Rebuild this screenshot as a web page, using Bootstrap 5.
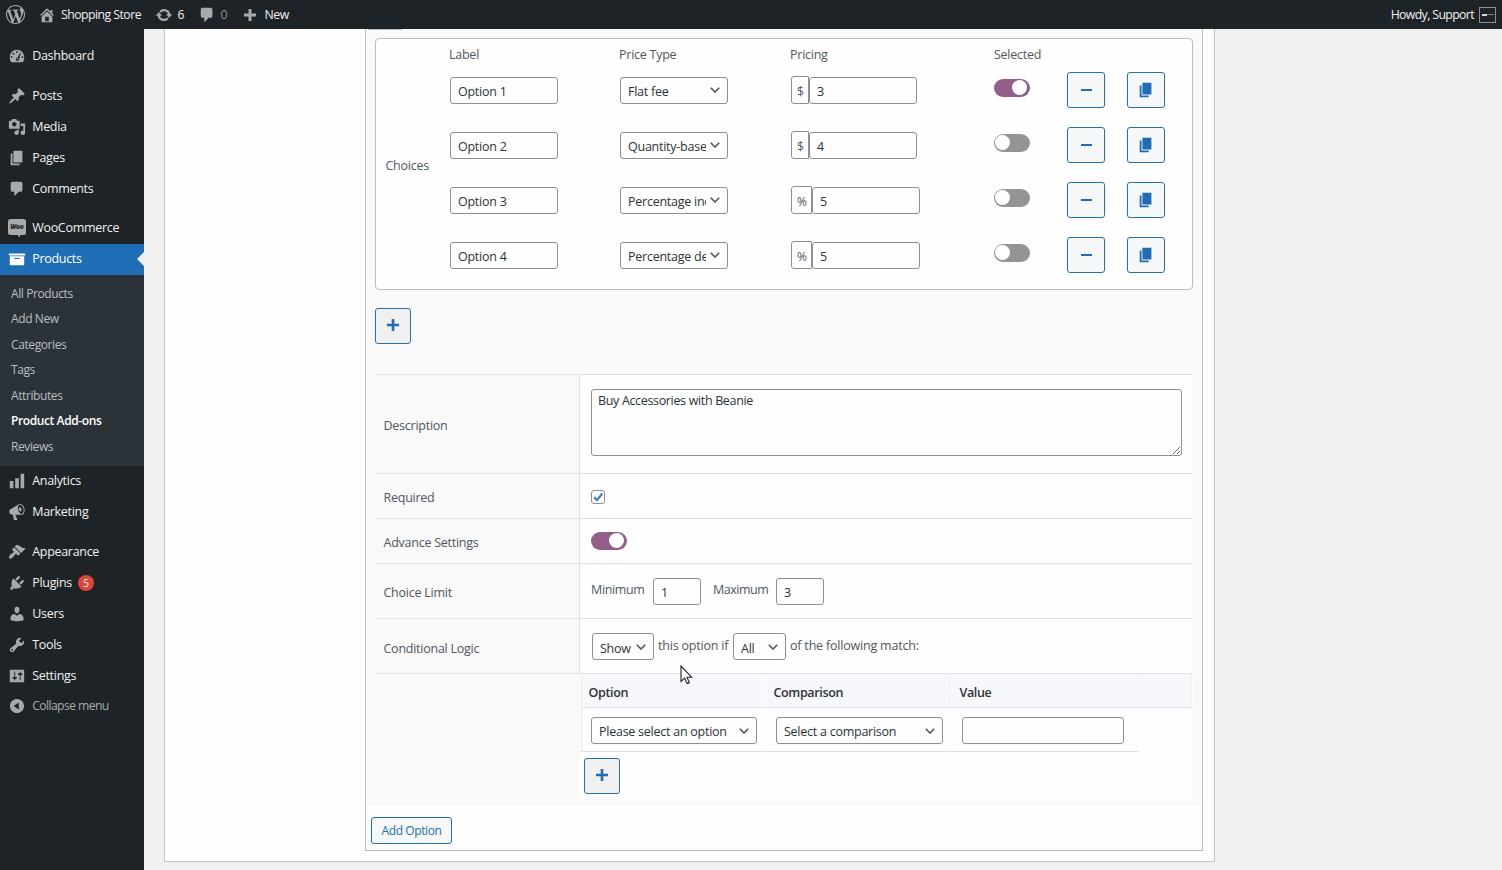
<!DOCTYPE html>
<html lang="en">
<head>
<meta charset="utf-8">
<title>Product Add-ons</title>
<link href="https://cdn.jsdelivr.net/npm/bootstrap@5.3.0/dist/css/bootstrap.min.css" rel="stylesheet">
<style>
body{font-family:"Open Sans","Noto Sans",sans-serif;font-size:12.5px;line-height:18px;letter-spacing:-.25px;color:#50575e;background:#f0f0f1;height:870px;overflow:hidden}
svg{display:block;flex:none}
.topbar{height:29px;background:#1d2327;color:#f0f0f1;font-size:12.3px;letter-spacing:-.55px}
.topbar svg,.side svg{fill:#a7aaad}
.side{width:144px;background:#1d2327;color:#f0f0f1;padding-top:11.5px}
.side-item{height:30.9px;padding-left:7.5px;gap:6.7px;letter-spacing:-.3px}
.side-item.gap-top{margin-top:9px}
.side-item.active{background:#1f6db5;color:#fff;position:relative}
.side-item.active svg{fill:#fff}
.side-item.active::after{content:"";position:absolute;right:0;top:8px;border:7.5px solid transparent;border-right-color:#f0f0f1;border-left:0}
.side-item.collapse-item{color:#a7aaad;font-size:12.2px;letter-spacing:-.6px}
.sub{background:#2c3338;padding:6px 0 6.5px 11px;color:#bbbec1;font-size:12px;letter-spacing:-.4px}
.sub div{height:25.5px;line-height:25.5px}
.sub .current{color:#fff;font-weight:600;letter-spacing:-.4px}
.count{width:16px;height:16px;background:#e0443a;font-size:10px;line-height:16px;color:#fff}
.avatar{width:17px;height:16px;border:1px solid #8c8f94;background:#1d2327}
.avatar i{width:5px;height:2px;background:#d5d5d5}
.avatar b{width:7px;height:1px;background:#777}
.panel{width:1051px;height:833px;margin-left:20px;background:#fefefe;border:1px solid #c3c4c7;border-top:0;padding:0 11px 10px 200px}
.addon{border:1px solid #b9bbbf;border-top:0;height:822px}
.addon-body{background:#f9f9fa;height:777px;padding:9px 9px 0}
.stub{width:34px;height:1px;background:#b9bbbf;margin:-9px 0 8px -7px}
.choices{height:252px;border:1px solid #b9bbbf;border-radius:4px;background:#fefefe}
.choices-name{width:74px;padding:3px 0 0 9.5px}
.choice{display:grid;grid-template-columns:170px 171px 203px 73px 60px 38px;align-items:center;height:55px}
.choice.head{height:15px;margin:7px 0 2px}
.choice.head span{margin-left:-1px}
.fld,.fld:disabled{height:27px;min-height:0;border:1px solid #8c8f94;border-radius:3px;background-color:#fefefe;color:#2c3338;font-size:12.5px;line-height:18px;letter-spacing:-.25px;padding:3px 7px 1px}
select.fld{padding-right:21px;background-image:url("data:image/svg+xml,%3Csvg xmlns='http://www.w3.org/2000/svg' viewBox='0 0 10 6'%3E%3Cpath d='M.8.8 5 5 9.2.8' fill='none' stroke='%2350575e' stroke-width='1.6'/%3E%3C/svg%3E");background-size:10px 6px;background-position:right 7px top 10px}
.choice select.fld{background-position-y:9px}
.w108{width:108px}
.unit{height:28px;border:1px solid #8c8f94;border-radius:3px 0 0 3px;padding:6px 4px 0 5px;line-height:18px;font-size:12px}
.switch{width:36px;height:18px;border-radius:9px;background:#949494;padding:1px}
.switch i{width:15px;height:15px;border-radius:50%;background:#fff}
.switch.on{background:#935f88;padding-right:3px}
.ibtn{width:38px;height:36px;border:1px solid #2271b1;border-radius:3px;background:#f6f7f7;padding:0}
.choice .ibtn{margin-top:-1px}
.ibtn svg{fill:#1f6db5}
.ibtn.sq{width:36px;background:#f0f0f1}
.settings{margin-top:30px;width:818px;border-top:1px solid #dfe0e3}
.srow{border-bottom:1px solid #dfe0e3}
.srow>.k{width:205px;border-right:1px solid #dfe0e3;padding-left:8.5px;padding-top:3px}
.srow>.v{background:#fefefe;padding-left:11px}
textarea.fld{height:67px;padding:2px 6px;width:591px;resize:vertical;letter-spacing:-.34px}
.cbx{width:14px;height:14px;border:1px solid #8c8f94;border-radius:3px;background:#fff;margin-top:2px}
.cond{display:grid;grid-template-columns:185px 186px 188px 53px;width:612px;margin-left:1px}
.cond .h{height:34px;background:#f6f8fb;border-bottom:1px solid #dfe0e5;border-right:1px solid #fff;font-weight:600;color:#2c3338;padding:10px 0 0 7.5px;letter-spacing:-.35px;box-shadow:inset -1px 0 #eef0f3}
.cond .c{height:44px;border-bottom:1px solid #dfe0e5;border-right:2px solid #fefefe;padding:9px 0 0 10px}
.cond .h:first-child,.cond .c.first{box-shadow:inset 1px 0 #e6e8ec}
.logic .fld{padding-top:5px;padding-bottom:0}
.addbtn{width:81px;height:27px;border:1px solid #2271b1;border-radius:3px;background:#f6f7f7;color:#2271b1;margin:11px 0 0 5px;padding:1px 0 0;font-size:12px;line-height:18px;letter-spacing:-.4px}
.pointer{position:absolute;left:680px;top:665px}
</style>
</head>
<body>
<header class="topbar d-flex align-items-center">
  <svg style="margin-left:6px" width="19" height="19" viewBox="0 0 20 20"><path d="M20 10c0-5.51-4.49-10-10-10C4.48 0 0 4.49 0 10c0 5.52 4.48 10 10 10 5.51 0 10-4.48 10-10zM7.78 15.37L4.37 6.22c.55-.02 1.17-.08 1.17-.08.5-.06.44-1.13-.06-1.11 0 0-1.45.11-2.37.11-.18 0-.37 0-.58-.01C4.12 2.69 6.87 1.11 10 1.11c2.33 0 4.45.87 6.05 2.34-.68-.11-1.65.39-1.65 1.58 0 .74.45 1.36.9 2.1.35.61.55 1.36.55 2.46 0 1.49-1.4 5-1.4 5l-3.03-8.37c.54-.02.82-.17.82-.17.5-.05.44-1.25-.06-1.22 0 0-1.44.12-2.38.12-.87 0-2.33-.12-2.33-.12-.5-.03-.56 1.2-.06 1.22l.92.08 1.26 3.41zM17.41 10c.24-.64.74-1.87.43-4.25.7 1.29 1.05 2.71 1.05 4.25 0 3.29-1.73 6.24-4.4 7.78.97-2.59 1.94-5.2 2.92-7.78zM6.1 18.09C3.12 16.65 1.11 13.53 1.11 10c0-1.3.23-2.48.72-3.59C3.25 10.3 4.67 14.2 6.1 18.09zm4.03-6.63l2.58 6.98c-.86.29-1.76.45-2.71.45-.79 0-1.57-.11-2.29-.33.81-2.38 1.62-4.74 2.42-7.1z"/></svg>
  <svg style="margin-left:13px" width="18" height="18" viewBox="0 0 20 20"><path d="M16 8.5l1.53 1.53-1.06 1.06L10 4.6l-6.47 6.5-1.06-1.07L10 2.5l4 4v-2h2v4zm-6-2.46l6 5.99V18H4v-5.97zM12 17v-5H8v5h4z"/></svg>
  <span class="flex-shrink-0 text-nowrap" style="width:98.5px;padding-left:5px">Shopping Store</span>
  <svg width="18" height="18" viewBox="0 0 20 20"><path d="M10.2 3.28c3.53 0 6.43 2.61 6.92 6h2.08l-3.5 4-3.5-4h2.32c-.45-1.97-2.21-3.45-4.32-3.45-1.45 0-2.73.71-3.54 1.78L4.95 5.66C6.23 4.2 8.11 3.28 10.2 3.28zm-.4 13.44c-3.52 0-6.43-2.61-6.92-6H.8l3.5-4c1.17 1.33 2.33 2.67 3.5 4H5.48c.45 1.97 2.21 3.45 4.32 3.45 1.45 0 2.73-.71 3.54-1.78l1.71 1.95c-1.28 1.46-3.15 2.38-5.25 2.38z"/></svg>
  <span style="width:25px;padding-left:5px">6</span>
  <svg width="18" height="18" viewBox="0 0 20 20"><path d="M5 2h9c1.100 0 2 .9 2 2v7c0 1.100-.9 2-2 2h-2l-5 5v-5H5c-1.100 0-2-.9-2-2V4c0-1.100.9-2 2-2z"/></svg>
  <span style="width:26px;padding-left:5px;color:#8c8f94">0</span>
  <svg width="16" height="18" viewBox="0 0 16 18"><path d="M6.500 3h3v4.500H14v3H9.500V15h-3v-4.500H2v-3h4.500z"/></svg>
  <span style="padding-left:7px;letter-spacing:-.5px">New</span>
  <span class="ms-auto" style="padding-right:5px;letter-spacing:-.63px">Howdy, Support</span>
  <span class="avatar d-flex align-items-center justify-content-center me-1"><i></i><b></b></span>
  <span style="width:2px"></span>
</header>
<div class="d-flex" style="height:841px">
<nav class="side flex-shrink-0">
  <div class="side-item d-flex align-items-center"><svg width="18" height="18" viewBox="0 0 20 20"><path fill-rule="evenodd" d="M3.760 17h12.480c1.340-1.630 1.760-3.820 1.760-6 0-4.400-3.600-8-8-8s-8 3.600-8 8c0 2.180.420 4.370 1.760 6zM9 5.500a1 1 0 1 1 2 0 1 1 0 1 1-2 0zM5 7.500a1 1 0 1 1 2 0 1 1 0 1 1-2 0zM3 11a1 1 0 1 1 2 0 1 1 0 1 1-2 0zM15 11a1 1 0 1 1 2 0 1 1 0 1 1-2 0zM13.700 6.300l.6.500-1.800 6.200c.3 1.400-.8 2.500-2 2.500-1.400 0-2.300-1.200-1.800-2.500.3-.7.900-1.100 1.600-1.100zM9.800 13.300a.8.800 0 1 0 1.600 0 .8.800 0 1 0-1.600 0z"/></svg>Dashboard</div>
  <div class="side-item gap-top d-flex align-items-center"><svg width="18" height="18" viewBox="0 0 20 20"><path d="M10.440 3.020l1.820-1.820 6.360 6.350-1.830 1.820c-1.050-.68-2.480-.57-3.410.36l-.75.75c-.92.93-1.040 2.350-.35 3.410l-1.830 1.820-2.410-2.410-2.800 2.790c-.42.42-3.380 2.710-3.800 2.290s1.860-3.390 2.280-3.810l2.790-2.790L4.100 9.360l1.830-1.820c1.050.69 2.480.57 3.400-.36l.75-.75c.93-.92 1.050-2.350.36-3.410z"/></svg>Posts</div>
  <div class="side-item d-flex align-items-center"><svg width="18" height="18" viewBox="0 0 20 20"><path d="M13 11V4c0-.55-.45-1-1-1h-1.670L9 1H5L3.670 3H2c-.55 0-1 .45-1 1v7c0 .55.45 1 1 1h10c.55 0 1-.45 1-1zM7 4.500c1.380 0 2.500 1.120 2.500 2.500S8.380 9.500 7 9.500 4.500 8.380 4.500 7 5.620 4.500 7 4.500zM14 6h5v10.500c0 1.380-1.120 2.500-2.500 2.500S14 17.880 14 16.500s1.120-2.500 2.500-2.500c.17 0 .34.020.5.050V9h-3V6zm-4 8.050V13h2v3.500c0 1.380-1.120 2.500-2.500 2.500S7 17.880 7 16.500 8.120 14 9.500 14c.17 0 .34.020.5.050z"/></svg>Media</div>
  <div class="side-item d-flex align-items-center"><svg width="18" height="18" viewBox="0 0 20 20"><path d="M6 15V2h10v13H6zm-1 1h8v2H3V5h2v11z"/></svg>Pages</div>
  <div class="side-item d-flex align-items-center"><svg width="18" height="18" viewBox="0 0 20 20"><path d="M5 2h9c1.100 0 2 .9 2 2v7c0 1.100-.9 2-2 2h-2l-5 5v-5H5c-1.100 0-2-.9-2-2V4c0-1.100.9-2 2-2z"/></svg>Comments</div>
  <div class="side-item gap-top d-flex align-items-center"><svg width="18" height="18" viewBox="0 0 18 18"><path d="M2.500 0h13A2.500 2.500 0 0 1 18 2.500v11a2.500 2.500 0 0 1-2.500 2.500H12v2.300L9.500 16h-7A2.500 2.500 0 0 1 0 13.500v-11A2.500 2.500 0 0 1 2.500 0z"/><text x="8.800" y="10" text-anchor="middle" font-family="Open Sans" font-size="6.500" font-weight="800" font-style="italic" fill="#1d2327">Woo</text></svg>WooCommerce</div>
  <div class="side-item active d-flex align-items-center"><svg width="18" height="18" viewBox="0 0 20 20"><path d="M19 4v2H1V4h18zM2 7h16v10H2V7zm11 3V9H7v1h6z"/></svg>Products</div>
  <div class="sub">
    <div>All Products</div><div>Add New</div><div>Categories</div><div>Tags</div><div>Attributes</div><div class="current">Product Add-ons</div><div>Reviews</div>
  </div>
  <div class="side-item d-flex align-items-center"><svg width="18" height="18" viewBox="0 0 20 20"><path d="M18 18V2h-4v16h4zm-6 0V7H8v11h4zm-6 0v-8H2v8h4z"/></svg>Analytics</div>
  <div class="side-item d-flex align-items-center"><svg width="18" height="18" viewBox="0 0 20 20"><path fill-rule="evenodd" d="M18.150 5.940c.46 1.620.38 3.220-.02 4.480-.42 1.280-1.260 2.180-2.300 2.480-.16.060-.26.060-.4.060-.06.020-.12.020-.18.020-.06.020-.14.020-.22.020h-6.800l2.220 5.500c.02.14-.06.26-.14.34-.08.1-.24.16-.34.16H6.950c-.1 0-.26-.06-.34-.16-.08-.08-.16-.2-.14-.34l-1-5.500H4.250l-.02-.02c-.5.060-1.080-.18-1.540-.62s-.88-1.080-1.060-1.880c-.24-.8-.2-1.560-.02-2.200.18-.62.58-1.080 1.060-1.300l.02-.02 9-5.400c.1-.06.18-.1.24-.16.060-.04.14-.08.24-.12.16-.08.28-.12.5-.18 1.040-.3 2.240.1 3.220.98s1.840 2.240 2.260 3.860zm-2.580 5.980h-.02c.4-.1.74-.34 1.040-.7.58-.7.86-1.760.86-3.040 0-.64-.1-1.300-.28-1.980-.34-1.360-1.020-2.500-1.780-3.240s-1.680-1.100-2.460-.88c-.82.22-1.400.96-1.700 2-.32 1.040-.28 2.360.06 3.720.38 1.360 1 2.500 1.800 3.240.78.74 1.620 1.100 2.480.88zM13.030 4.840c.22-.04.42-.02.62.04.38.16.76.48 1.020 1s.42 1.200.42 1.780c0 .3-.04.56-.12.8-.18.48-.44.84-.86.94-.34.1-.8-.06-1.140-.4s-.64-.86-.78-1.500c-.18-.62-.12-1.240.02-1.720s.48-.84.82-.94z"/></svg>Marketing</div>
  <div class="side-item gap-top d-flex align-items-center"><svg width="18" height="18" viewBox="0 0 20 20"><path d="M14.480 11.060L7.410 3.990l1.500-1.500c.5-.56 2.300-.47 3.510.32 1.210.8 1.430 1.280 2.910 2.100 1.180.64 2.450 1.260 4.450.85zm-.71.71L6.700 4.700 4.930 6.470c-.39.39-.39 1.020 0 1.410l1.060 1.060c.39.39.39 1.030 0 1.420-.6.6-1.430 1.110-2.210 1.690-.35.26-.7.53-1.010.84C1.430 14.230.4 16.080 1.400 17.070c.99 1 2.840-.03 4.180-1.360.31-.31.58-.66.85-1.020.57-.78 1.080-1.610 1.690-2.210.39-.39 1.020-.39 1.410 0l1.060 1.060c.39.39 1.020.39 1.410 0z"/></svg>Appearance</div>
  <div class="side-item d-flex align-items-center"><svg width="18" height="18" viewBox="0 0 20 20"><path d="M13.110 4.360L9.870 7.600 8 5.730l3.240-3.240c.35-.34 1.050-.2 1.560.32.52.51.66 1.210.31 1.550zm-8 1.770l.91-1.120 9.010 9.010-1.190.84c-.71.71-2.630 1.160-3.820 1.160H6.140L4.900 17.260c-.59.59-1.540.59-2.120 0-.59-.58-.59-1.530 0-2.120l1.240-1.240v-3.880c0-1.130.4-3.190 1.090-3.890zm7.260 3.970l3.240-3.240c.34-.35 1.040-.21 1.550.31.52.51.66 1.210.31 1.550l-3.240 3.250z"/></svg><span style="width:39px">Plugins</span><span class="count rounded-circle text-center">5</span></div>
  <div class="side-item d-flex align-items-center"><svg width="18" height="18" viewBox="0 0 20 20"><path d="M10 9.250c-2.270 0-2.730-3.440-2.730-3.440C7 4.020 7.820 2 9.970 2c2.160 0 2.980 2.020 2.710 3.810 0 0-.41 3.440-2.680 3.440zm0 2.570L12.720 10c2.390 0 4.520 2.330 4.520 4.530v2.490s-3.650 1.130-7.240 1.130c-3.650 0-7.240-1.130-7.240-1.130v-2.490c0-2.250 1.940-4.480 4.470-4.480z"/></svg>Users</div>
  <div class="side-item d-flex align-items-center"><svg width="18" height="18" viewBox="0 0 20 20"><path fill-rule="evenodd" d="M16.680 9.770c-1.340 1.340-3.300 1.670-4.950.99l-5.410 6.520c-.99.99-2.590.99-3.580 0s-.99-2.590 0-3.570l6.520-5.420c-.68-1.650-.35-3.610.99-4.950 1.280-1.280 3.120-1.620 4.720-1.060l-2.890 2.890 2.820 2.820 2.860-2.870c.53 1.580.18 3.390-1.080 4.650zM3.810 16.210c.4.39 1.040.39 1.430 0 .4-.4.4-1.040 0-1.430-.39-.4-1.030-.4-1.430 0-.39.39-.39 1.030 0 1.430z"/></svg>Tools</div>
  <div class="side-item d-flex align-items-center"><svg width="18" height="18" viewBox="0 0 20 20"><path fill-rule="evenodd" d="M18 16V4c0-.55-.45-1-1-1H3c-.55 0-1 .45-1 1v12c0 .55.45 1 1 1h14c.55 0 1-.45 1-1zM8 11h1c.55 0 1 .45 1 1s-.45 1-1 1H8v1.500c0 .28-.22.5-.5.5s-.5-.22-.5-.5V13H6c-.55 0-1-.45-1-1s.45-1 1-1h1V5.500c0-.28.22-.5.5-.5s.5.22.5.5V11zm5-2h-1c-.55 0-1-.45-1-1s.45-1 1-1h1V5.500c0-.28.22-.5.5-.5s.5.22.5.5V7h1c.55 0 1 .45 1 1s-.45 1-1 1h-1v5.500c0 .28-.22.5-.5.5s-.5-.22-.5-.5V9z"/></svg>Settings</div>
  <div class="side-item collapse-item d-flex align-items-center"><svg width="18" height="18" viewBox="0 0 20 20"><path fill-rule="evenodd" d="M10 2.160c4.330 0 7.840 3.510 7.840 7.840s-3.510 7.840-7.840 7.840S2.160 14.330 2.160 10 5.710 2.160 10 2.160zm2 11.720V6.120L6.180 9.970z"/></svg>Collapse menu</div>
</nav>
<main class="flex-grow-1">
<div class="panel"><div class="addon"><div class="addon-body">
  <div class="stub"></div>
  <section class="choices d-flex">
    <div class="choices-name align-self-center">Choices</div>
    <div class="flex-grow-1" id="choices">
      <div class="choice head"><span>Label</span><span>Price Type</span><span>Pricing</span><span style="margin-left:0">Selected</span></div>
    </div>
  </section>
  <button class="btn ibtn sq d-flex align-items-center justify-content-center" style="margin-top:18px"><svg width="12" height="14" viewBox="0 0 12 14"><path d="M4.700 0h2.600v4.700H12v2.600H7.300V12H4.700V7.300H0V4.700h4.700z"/></svg></button>
  <section class="settings">
    <div class="srow d-flex" style="height:99px"><div class="k d-flex align-items-center">Description</div><div class="v flex-grow-1" style="padding-top:14px"><textarea class="form-control fld">Buy Accessories with Beanie</textarea></div></div>
    <div class="srow d-flex" style="height:45px"><div class="k d-flex align-items-center">Required</div><div class="v flex-grow-1 d-flex align-items-center"><span class="cbx"><svg width="12" height="12" viewBox="0 0 12 12"><path d="M2 6.200l3 3L10.300 2.600" fill="none" stroke="#3582c4" stroke-width="2.200"/></svg></span></div></div>
    <div class="srow d-flex" style="height:45px"><div class="k d-flex align-items-center">Advance Settings</div><div class="v flex-grow-1 d-flex align-items-center"><span class="switch on d-flex justify-content-end"><i></i></span></div></div>
    <div class="srow d-flex" style="height:55px"><div class="k d-flex align-items-center">Choice Limit</div><div class="v flex-grow-1 d-flex align-items-center"><span style="width:62px;padding-bottom:2px;letter-spacing:-.35px">Minimum</span><input class="form-control fld" style="width:48px" value="1"><span style="width:75px;padding:0 0 2px 12px;letter-spacing:-.5px">Maximum</span><input class="form-control fld" style="width:48px" value="3"></div></div>
    <div class="srow logic d-flex" style="height:55px"><div class="k d-flex align-items-center" style="padding-top:5px">Conditional Logic</div><div class="v flex-grow-1 d-flex align-items-center"><select class="form-select fld" style="width:62px;margin-left:1px"><option>Show</option></select><span style="width:79px;padding:0 0 0 4px;letter-spacing:-.2px">this option if</span><select class="form-select fld" style="width:53px"><option>All</option></select><span style="padding:0 0 0 4px;letter-spacing:-.2px">of the following match:</span></div></div>
    <div class="d-flex" style="height:125px"><div style="width:205px"></div><div class="flex-grow-1" style="background:#fefefe">
      <div class="cond">
        <div class="h">Option</div><div class="h">Comparison</div><div class="h">Value</div><div class="h"></div>
        <div class="c first"><select class="form-select fld" style="width:166px"><option>Please select an option</option></select></div>
        <div class="c"><select class="form-select fld" style="width:167px"><option>Select a comparison</option></select></div>
        <div class="c"><input class="form-control fld" style="width:162px"></div><div></div>
      </div>
      <button class="btn ibtn sq d-flex align-items-center justify-content-center" style="margin:6px 0 0 4px"><svg width="12" height="14" viewBox="0 0 12 14"><path d="M4.700 0h2.600v4.700H12v2.600H7.300V12H4.700V7.300H0V4.700h4.700z"/></svg></button>
    </div></div>
  </section>
</div>
<button class="btn addbtn">Add Option</button>
</div></div>
</main>
</div>
<svg class="pointer" width="13" height="21" viewBox="0 0 13 21"><path d="M1 1v15.500l3.600-3.400 2.500 5.500 2.300-1-2.400-5.400h4.600z" fill="#fff" stroke="#222" stroke-width="1.100"/></svg>
<script src="https://cdn.jsdelivr.net/npm/bootstrap@5.3.0/dist/js/bootstrap.bundle.min.js"></script>
<script>
const rows=[["Option 1","Flat fee","$","3",1],["Option 2","Quantity-based fee","$","4",0],["Option 3","Percentage increase","%","5",0],["Option 4","Percentage decrease","%","5",0]];
document.getElementById("choices").insertAdjacentHTML("beforeend",rows.map(([l,t,u,v,on])=>`<div class="choice">
<input class="form-control fld w108" value="${l}">
<select class="form-select fld w108"><option>${t}</option></select>
<div class="d-flex align-items-end" style="margin-top:-1px"><span class="unit" style="width:${u==="$"?18:21}px">${u}</span><input class="form-control fld w108" value="${v}"></div>
<span class="switch d-flex ${on?"on justify-content-end":""}" style="margin-top:-5px"><i></i></span>
<button class="btn ibtn d-flex align-items-center justify-content-center"><svg width="12" height="2" viewBox="0 0 12 2"><path d="M1 0h11v2H1z"/></svg></button>
<button class="btn ibtn d-flex align-items-center justify-content-center"><svg width="18" height="18" viewBox="0 0 20 20"><path d="M6 15V2h10v13H6zm-1 1h8v2H3V5h2v11z"/></svg></button></div>`).join(""));
</script>
</body>
</html>
